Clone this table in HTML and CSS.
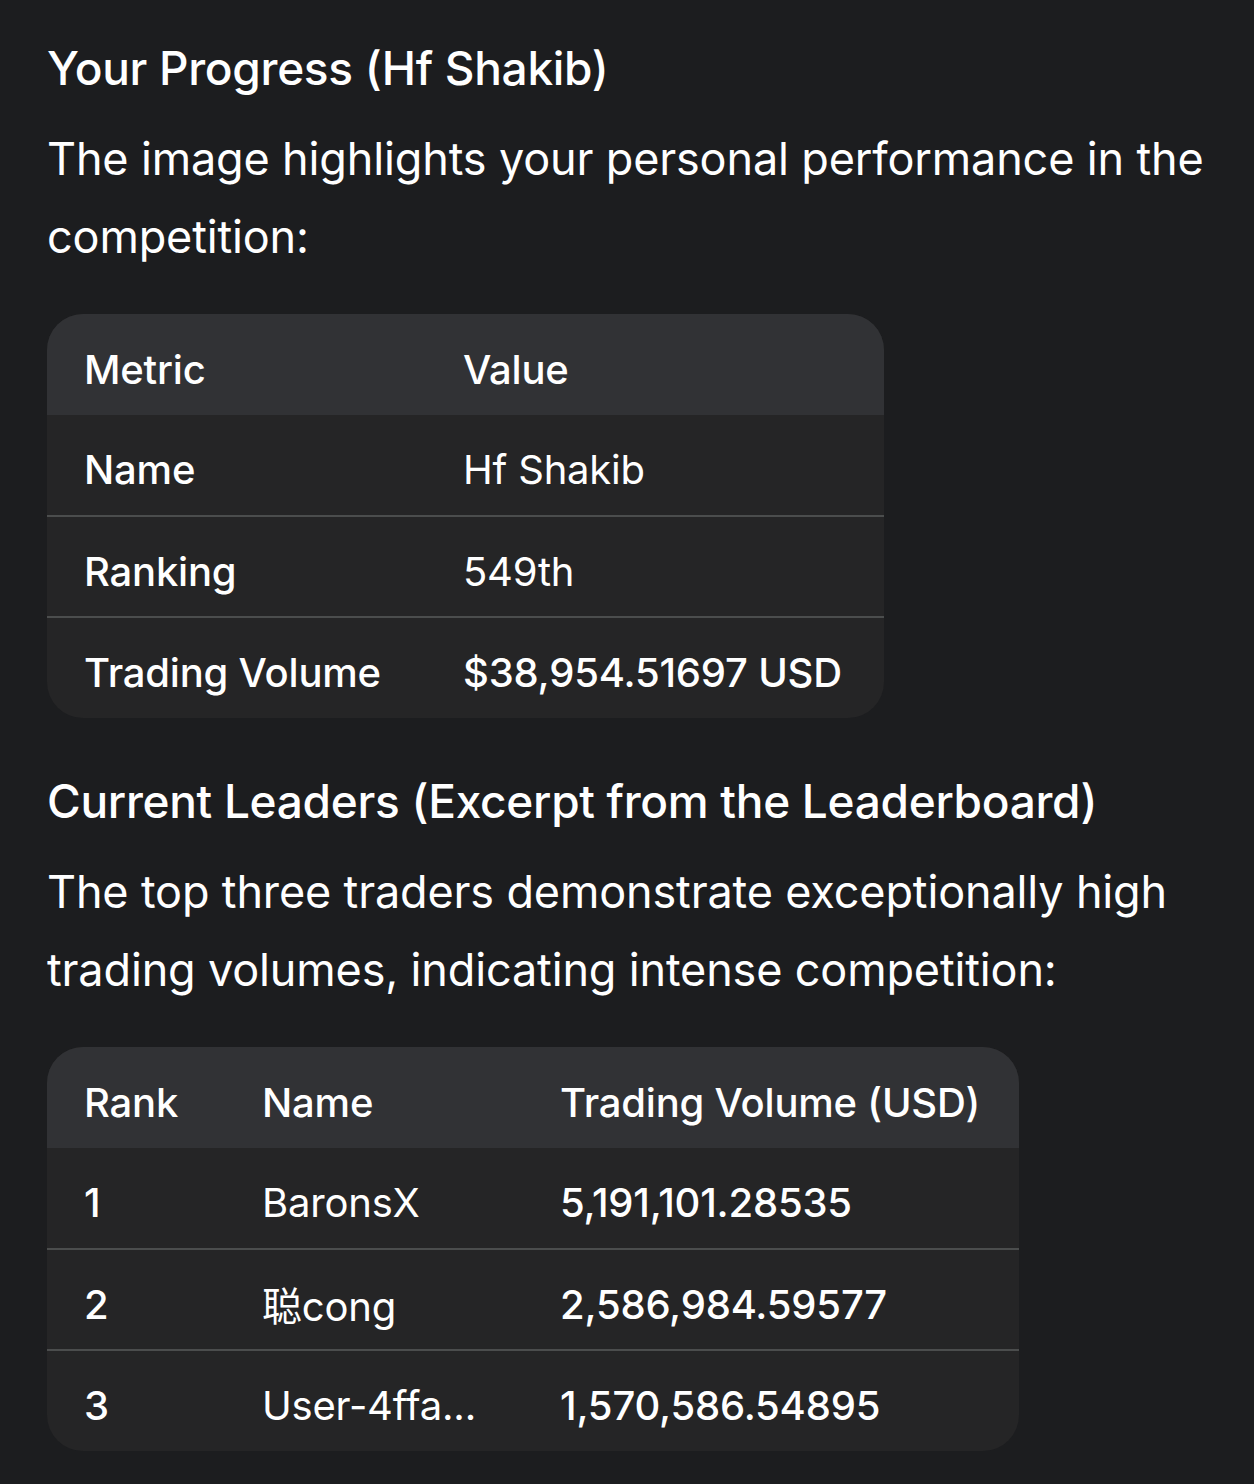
FILE: index.html
```html
<!DOCTYPE html>
<html>
<head>
<meta charset="utf-8">
<link rel="stylesheet" href="styles.css">
</head>
<body>
<main class="doc">
  <h2 class="heading">Your Progress (Hf Shakib)</h2>
  <p class="para">The image highlights your personal performance in the competition:</p>
  <div class="table-wrap t1">
    <table class="data">
      <colgroup><col class="c1a"><col class="c1b"></colgroup>
      <thead><tr><th>Metric</th><th>Value</th></tr></thead>
      <tbody>
        <tr><td class="strong">Name</td><td>Hf Shakib</td></tr>
        <tr><td class="strong">Ranking</td><td>549th</td></tr>
        <tr><td class="strong">Trading Volume</td><td class="strong">$38,954.51697 USD</td></tr>
      </tbody>
    </table>
  </div>
  <h2 class="heading h-second">Current Leaders (Excerpt from the Leaderboard)</h2>
  <p class="para">The top three traders demonstrate exceptionally high trading volumes, indicating intense competition:</p>
  <div class="table-wrap t2">
    <table class="data">
      <colgroup><col class="c2a"><col class="c2b"><col class="c2c"></colgroup>
      <thead><tr><th>Rank</th><th>Name</th><th>Trading Volume (USD)</th></tr></thead>
      <tbody>
        <tr><td class="strong">1</td><td>BaronsX</td><td class="strong">5,191,101.28535</td></tr>
        <tr><td class="strong">2</td><td>聪cong</td><td class="strong">2,586,984.59577</td></tr>
        <tr><td class="strong">3</td><td>User-4ffa...</td><td class="strong">1,570,586.54895</td></tr>
      </tbody>
    </table>
  </div>
</main>
</body>
</html>
```
FILE: styles.css
```css
html, body {
  margin: 0;
  padding: 0;
  background: #1c1d1f;
}
body {
  font-family: Inter, "Noto Sans CJK SC", sans-serif;
  color: #ffffff;
}
.doc {
  padding: 38px 0 30px 47px;
}
.heading {
  margin: 0;
  font-size: 46px;
  font-weight: 500;
  line-height: 60px;
  letter-spacing: -0.3px;
}
.h-second {
  margin-top: 53px;
}
.para {
  margin: 22px 0 0 0;
  font-size: 45px;
  line-height: 78px;
  font-weight: 400;
  width: 1180px;
  letter-spacing: -0.15px;
}
.table-wrap {
  margin-top: 38px;
  border-radius: 36px;
  overflow: hidden;
  background: #252526;
}
.t1 { width: 837px; }
.t2 { width: 972px; }
.data {
  width: 100%;
  border-collapse: collapse;
  table-layout: fixed;
  font-size: 40px;
}
.c1a { width: 379px; }
.c2a { width: 178px; }
.c2b { width: 298px; }
.data th {
  background: #313235;
  font-weight: 500;
  text-align: left;
  height: 101px;
  padding: 9px 0 0 37px;
  box-sizing: border-box;
  white-space: nowrap;
  letter-spacing: -0.2px;
}
.data td {
  height: 101px;
  padding: 9px 0 0 37px;
  box-sizing: border-box;
  font-weight: 400;
  white-space: nowrap;
  letter-spacing: -0.2px;
}
.data tbody tr + tr td {
  border-top: 2px solid #4b4d4d;
}
.data td.strong {
  font-weight: 500;
}
```
